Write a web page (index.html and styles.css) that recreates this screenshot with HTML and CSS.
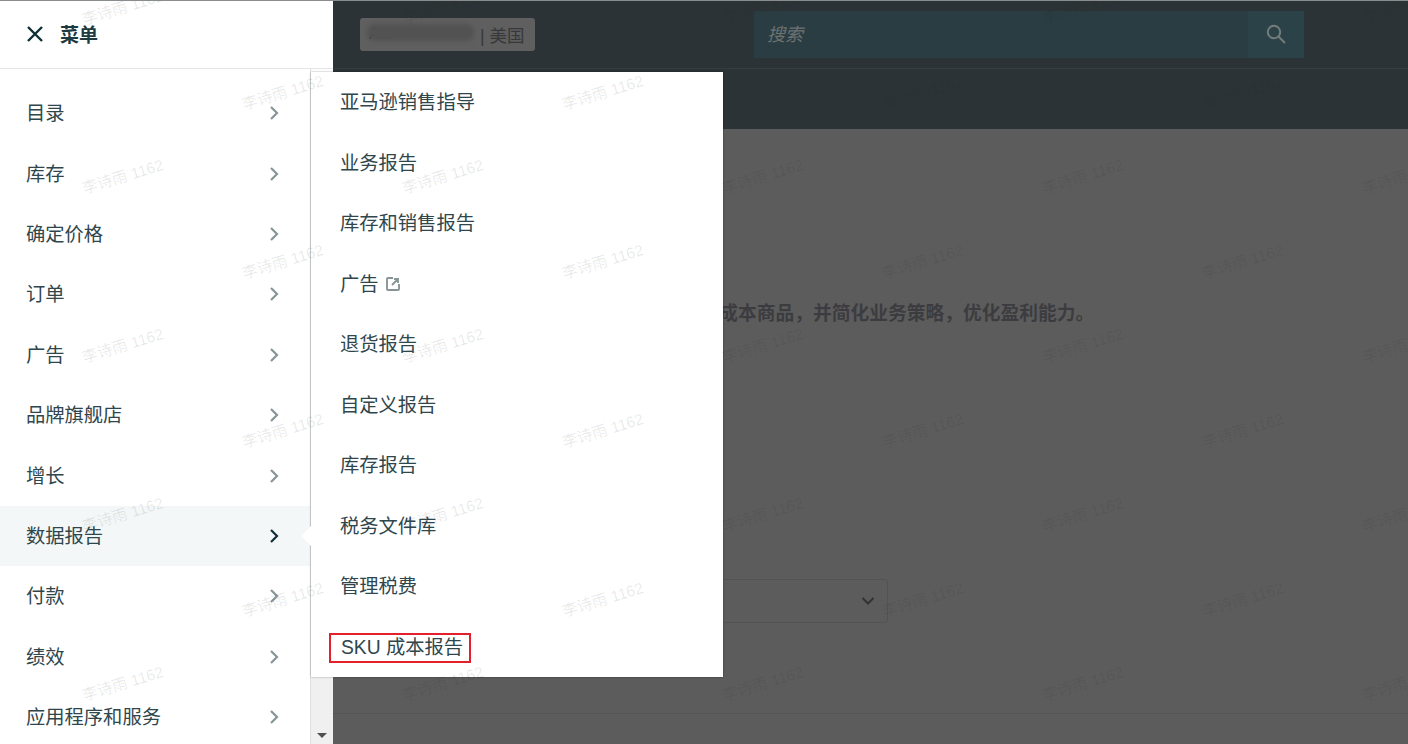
FILE: index.html
```html
<!DOCTYPE html>
<html lang="zh-CN">
  <head>
    <meta charset="UTF-8" />
    <title>SKU 成本报告</title>
    <link rel="stylesheet" href="styles.css">
  </head>
  <body>
    <div class="page">
      <aside class="drawer">
        <div class="drawer-head">
          <svg class="close-icon" width="18" height="18" viewBox="0 0 18 18"><path d="M2 2l14 14M16 2L2 16" /></svg>
          <span class="drawer-title">菜单</span>
        </div>
        <div class="drawer-body">
          <ul class="menu-list">
            <li class="menu-item">目录<svg class="chev" width="10" height="16" viewBox="0 0 10 16"><path d="M2 2l6 6-6 6" /></svg></li>
            <li class="menu-item">库存<svg class="chev" width="10" height="16" viewBox="0 0 10 16"><path d="M2 2l6 6-6 6" /></svg></li>
            <li class="menu-item">确定价格<svg class="chev" width="10" height="16" viewBox="0 0 10 16"><path d="M2 2l6 6-6 6" /></svg></li>
            <li class="menu-item">订单<svg class="chev" width="10" height="16" viewBox="0 0 10 16"><path d="M2 2l6 6-6 6" /></svg></li>
            <li class="menu-item">广告<svg class="chev" width="10" height="16" viewBox="0 0 10 16"><path d="M2 2l6 6-6 6" /></svg></li>
            <li class="menu-item">品牌旗舰店<svg class="chev" width="10" height="16" viewBox="0 0 10 16"><path d="M2 2l6 6-6 6" /></svg></li>
            <li class="menu-item">增长<svg class="chev" width="10" height="16" viewBox="0 0 10 16"><path d="M2 2l6 6-6 6" /></svg></li>
            <li class="menu-item active">数据报告<svg class="chev" width="10" height="16" viewBox="0 0 10 16"><path d="M2 2l6 6-6 6" /></svg></li>
            <li class="menu-item">付款<svg class="chev" width="10" height="16" viewBox="0 0 10 16"><path d="M2 2l6 6-6 6" /></svg></li>
            <li class="menu-item">绩效<svg class="chev" width="10" height="16" viewBox="0 0 10 16"><path d="M2 2l6 6-6 6" /></svg></li>
            <li class="menu-item">应用程序和服务<svg class="chev" width="10" height="16" viewBox="0 0 10 16"><path d="M2 2l6 6-6 6" /></svg></li>
          </ul>
          <div class="scroll-gutter"><span class="scroll-down"></span></div>
        </div>
      </aside>

      <main class="main">
        <header class="topbar">
          <div class="account">
            <span class="account-name">A...</span>
            <span class="account-market">| 美国</span>
          </div>
          <div class="search">
            <span class="search-input">搜索</span>
            <span class="search-btn">
              <svg width="22" height="22" viewBox="0 0 22 22"><circle cx="9" cy="9" r="6.2" /><path d="M13.5 13.5l6.5 6.5" /></svg>
            </span>
          </div>
        </header>
        <div class="navbar"></div>
        <section class="content">
          <p class="lead">发现高成本商品，并简化业务策略，优化盈利能力。</p>
          <div class="select-box">
            <svg width="14" height="10" viewBox="0 0 14 10"><path d="M1.5 2l5.5 5.5L12.5 2" /></svg>
          </div>
          <div class="rule"></div>
        </section>
      </main>

      <ul class="flyout">
        <li class="flyout-item">亚马逊销售指导</li>
        <li class="flyout-item">业务报告</li>
        <li class="flyout-item">库存和销售报告</li>
        <li class="flyout-item">广告
          <svg class="ext-icon" width="16" height="16" viewBox="0 0 16 16"><path d="M8 2H3a1 1 0 0 0-1 1v10a1 1 0 0 0 1 1h10a1 1 0 0 0 1-1V8M7 9l5.5-5.5M9 3h4v4" /></svg>
        </li>
        <li class="flyout-item">退货报告</li>
        <li class="flyout-item">自定义报告</li>
        <li class="flyout-item">库存报告</li>
        <li class="flyout-item">税务文件库</li>
        <li class="flyout-item">管理税费</li>
        <li class="flyout-item"><span class="marked">SKU 成本报告</span></li>
      </ul>

      <div class="watermarks">
        <div class="wm-row"><span>李诗雨 1162</span><span>李诗雨 1162</span><span>李诗雨 1162</span><span>李诗雨 1162</span><span>李诗雨 1162</span></div>
        <div class="wm-row alt"><span>李诗雨 1162</span><span>李诗雨 1162</span><span>李诗雨 1162</span><span>李诗雨 1162</span></div>
        <div class="wm-row"><span>李诗雨 1162</span><span>李诗雨 1162</span><span>李诗雨 1162</span><span>李诗雨 1162</span><span>李诗雨 1162</span></div>
        <div class="wm-row alt"><span>李诗雨 1162</span><span>李诗雨 1162</span><span>李诗雨 1162</span><span>李诗雨 1162</span></div>
        <div class="wm-row"><span>李诗雨 1162</span><span>李诗雨 1162</span><span>李诗雨 1162</span><span>李诗雨 1162</span><span>李诗雨 1162</span></div>
        <div class="wm-row alt"><span>李诗雨 1162</span><span>李诗雨 1162</span><span>李诗雨 1162</span><span>李诗雨 1162</span></div>
        <div class="wm-row"><span>李诗雨 1162</span><span>李诗雨 1162</span><span>李诗雨 1162</span><span>李诗雨 1162</span><span>李诗雨 1162</span></div>
        <div class="wm-row alt"><span>李诗雨 1162</span><span>李诗雨 1162</span><span>李诗雨 1162</span><span>李诗雨 1162</span></div>
        <div class="wm-row"><span>李诗雨 1162</span><span>李诗雨 1162</span><span>李诗雨 1162</span><span>李诗雨 1162</span><span>李诗雨 1162</span></div>
        <div class="wm-row alt"><span>李诗雨 1162</span><span>李诗雨 1162</span><span>李诗雨 1162</span><span>李诗雨 1162</span></div>
      </div>
    </div>
  </body>
</html>
```

FILE: styles.css
```css
* {
  box-sizing: border-box;
}
html,
body {
  margin: 0;
  height: 744px;
  overflow: hidden;
}
body {
  font-family: "Liberation Sans", "Noto Sans CJK SC", sans-serif;
}
ul {
  list-style: none;
  margin: 0;
  padding: 0;
}
svg {
  fill: none;
  display: block;
}
.page {
  position: relative;
  display: grid;
  grid-template-columns: 333px 1fr;
  height: 744px;
  border-top: 1px solid #8a8d8d;
  overflow: hidden;
}

/* drawer */
.drawer {
  display: flex;
  flex-direction: column;
  height: 743px;
  background: #fff;
}
.drawer-head {
  display: flex;
  align-items: center;
  height: 68px;
  padding: 0 0 2px 26px;
  border-bottom: 1px solid #e3e6e6;
}
.close-icon path {
  stroke: #0f2f36;
  stroke-width: 2.4;
}
.drawer-title {
  margin-left: 16px;
  font-size: 19px;
  font-weight: 700;
  color: #1d3a41;
}
.drawer-body {
  display: flex;
  flex: 1;
  min-height: 0;
}
.menu-list {
  width: 311px;
  padding-top: 14px;
  border-right: 1px solid #dcdfdf;
  overflow: hidden;
}
.menu-item {
  display: flex;
  align-items: center;
  justify-content: space-between;
  height: 60.4px;
  padding: 0 31px 2px 26px;
  font-size: 19.3px;
  color: #2f464c;
}
.menu-item.active {
  background: #f3f7f7;
}
.chev {
  margin-top: 2px;
}
.chev path {
  stroke: #879596;
  stroke-width: 2.2;
}
.menu-item.active .chev path {
  stroke: #0f2f36;
}
.scroll-gutter {
  display: flex;
  flex: 1;
  align-items: flex-end;
  justify-content: center;
  padding-bottom: 6px;
  background: linear-gradient(#fff 600px, #f0f0f0 600px);
}
.scroll-down {
  width: 0;
  height: 0;
  border-left: 5px solid transparent;
  border-right: 5px solid transparent;
  border-top: 5px solid #505050;
}

/* dimmed page behind the drawer */
.main {
  display: flex;
  flex-direction: column;
  height: 743px;
  background: #5c5c5c;
}
.topbar {
  display: flex;
  align-items: center;
  height: 68px;
  padding: 0 0 1px 27px;
  background: #2c3336;
  border-bottom: 1px solid #363d40;
}
.account {
  display: flex;
  align-items: center;
  width: 175px;
  height: 33px;
  padding-left: 9px;
  background: #5f5f5f;
  border-radius: 3px;
}
.account-name {
  position: relative;
  width: 105px;
  font-size: 16px;
  color: #2e2e2e;
}
.account-name::after {
  content: "";
  position: absolute;
  left: -2px;
  right: 0;
  top: -1px;
  height: 17px;
  background: #525252;
  border-radius: 8px;
  filter: blur(2px);
}
.account-market {
  margin-left: 6px;
  font-size: 17.5px;
  color: #383838;
}
.search {
  display: flex;
  width: 550px;
  height: 47px;
  margin-left: 219px;
  background: #2a3d42;
}
.search-input {
  flex: 1;
  padding-left: 13px;
  font-size: 18px;
  font-style: italic;
  line-height: 48px;
  color: #6d7272;
}
.search-btn {
  display: flex;
  align-items: center;
  justify-content: center;
  width: 56px;
  background: #2b4348;
}
.search-btn svg {
  stroke: #737b7b;
  stroke-width: 2;
}
.navbar {
  height: 60px;
  background: #2c3336;
}
.content {
  padding-top: 172px;
}
.lead {
  margin: 0;
  padding-left: 330px;
  font-size: 18.75px;
  font-weight: 700;
  line-height: 26px;
  color: #3c3c40;
}
.select-box {
  display: flex;
  align-items: center;
  justify-content: flex-end;
  width: 400px;
  height: 44px;
  margin: 252px 0 0 155px;
  padding-right: 12px;
  border: 1px solid #535353;
  border-radius: 3px;
}
.select-box svg path {
  stroke: #303336;
  stroke-width: 2;
}
.rule {
  height: 1px;
  margin-top: 90px;
  background: #545454;
}

/* flyout over the drawer */
.flyout {
  position: absolute;
  left: 311px;
  top: 71px;
  width: 412px;
  background: #fff;
  box-shadow: 0 0 2px rgba(0, 0, 0, 0.35);
}
.flyout::before {
  content: "";
  position: absolute;
  left: -7px;
  top: 457px;
  width: 14px;
  height: 14px;
  background: #fff;
  transform: rotate(45deg);
}
.flyout-item {
  position: relative;
  display: flex;
  align-items: center;
  height: 60.5px;
  padding: 0 0 2px 29px;
  font-size: 19.3px;
  color: #2f464c;
}
.ext-icon {
  margin: 2px 0 0 6px;
}
.ext-icon path {
  stroke: #879596;
  stroke-width: 1.9;
}
.marked {
  display: inline-block;
  height: 30px;
  margin: 4px 0 0 -11px;
  padding: 0 6px 0 10px;
  border: 2px solid #e5202e;
  font-size: 19.3px;
  line-height: 25px;
}

/* watermark layer */
.watermarks {
  position: absolute;
  inset: 0;
  z-index: 5;
  overflow: hidden;
  pointer-events: none;
}
.wm-row {
  display: flex;
  width: 1800px;
  height: 84.5px;
  margin-left: -37px;
}
.wm-row:first-child {
  margin-top: -35px;
}
.wm-row.alt {
  margin-left: 123px;
}
.wm-row span {
  width: 320px;
  font-size: 15.5px;
  line-height: 84.5px;
  text-align: center;
  color: rgba(30, 30, 30, 0.1);
  transform: rotate(-17deg);
}
```
